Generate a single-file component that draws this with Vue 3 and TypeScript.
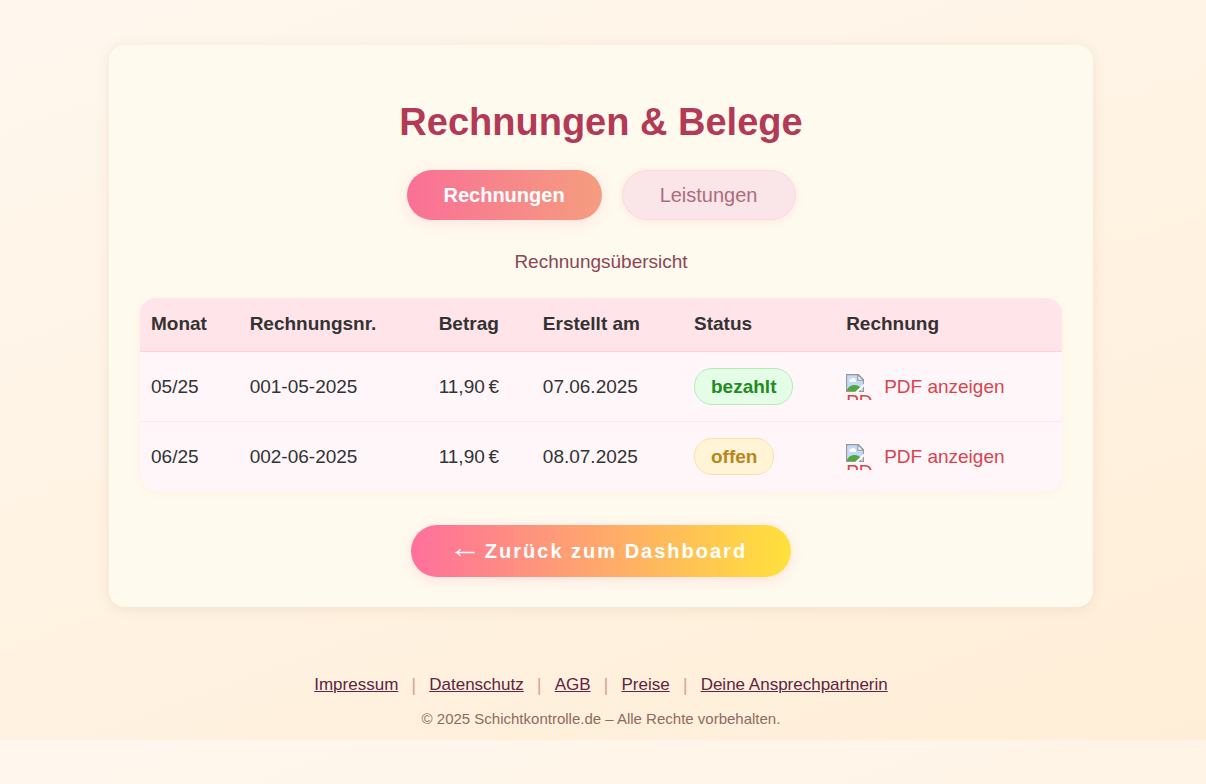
<script setup lang="ts">
import { ref } from 'vue'

interface Invoice {
  month: string
  number: string
  amount: string
  created: string
  status: 'bezahlt' | 'offen'
}

const tabs = ['Rechnungen', 'Leistungen']
const activeTab = ref('Rechnungen')

const invoices: Invoice[] = [
  { month: '05/25', number: '001-05-2025', amount: '11,90\u202f€', created: '07.06.2025', status: 'bezahlt' },
  { month: '06/25', number: '002-06-2025', amount: '11,90\u202f€', created: '08.07.2025', status: 'offen' },
]

const footerLinks = ['Impressum', 'Datenschutz', 'AGB', 'Preise', 'Deine Ansprechpartnerin']
</script>

<template>
  <div class="page">
    <main class="card">
      <h1>Rechnungen &amp; Belege</h1>

      <div class="tabs">
        <button
          v-for="tab in tabs"
          :key="tab"
          type="button"
          class="tab"
          :class="{ active: tab === activeTab }"
          @click="activeTab = tab"
        >{{ tab }}</button>
      </div>

      <p class="subtitle">Rechnungsübersicht</p>

      <table>
        <colgroup>
          <col class="c-month" />
          <col class="c-number" />
          <col class="c-amount" />
          <col class="c-date" />
          <col class="c-status" />
          <col />
        </colgroup>
        <thead>
          <tr>
            <th>Monat</th>
            <th>Rechnungsnr.</th>
            <th>Betrag</th>
            <th>Erstellt am</th>
            <th>Status</th>
            <th>Rechnung</th>
          </tr>
        </thead>
        <tbody>
          <tr v-for="inv in invoices" :key="inv.number">
            <td>{{ inv.month }}</td>
            <td>{{ inv.number }}</td>
            <td>{{ inv.amount }}</td>
            <td>{{ inv.created }}</td>
            <td><span class="badge" :class="inv.status">{{ inv.status }}</span></td>
            <td>
              <a href="#" class="pdf">
                <span class="thumb">
                  <svg viewBox="0 0 16 16" width="18" height="18" aria-hidden="true">
                    <path d="M.5.5H11L15.5 5V15.5H.5Z" fill="#c3d9fb" />
                    <path d="M3 6.5a1.7 1.7 0 0 1 2-2.3 2 2 0 0 1 3.5.8A1.3 1.3 0 0 1 8.5 7H4Z" fill="#fff" />
                    <path d="M1 15V13.5C3.5 10 7 9 11 10.5L13 12V15Z" fill="#4faa3c" />
                    <path d="M.5.5H11L15.5 5V15.5H.5Z" fill="none" stroke="#989898" />
                    <path d="M10.5.5V5.5H15.5Z" fill="#f5f5f5" stroke="#989898" />
                    <path d="M7.5 16.5L16.5 8V10.5L10.5 16.5Z" fill="#fff6fa" />
                  </svg>
                  <span class="alt">PDF</span>
                </span>
                <span>PDF anzeigen</span>
              </a>
            </td>
          </tr>
        </tbody>
      </table>

      <a href="#" class="back">
        <svg viewBox="0 0 20 12" width="20" height="12" aria-hidden="true">
          <path d="M1 7.500H19.500M5.500 4Q4 6.500 1 7.500Q4 8.500 5.500 11" fill="none" stroke="#fff" stroke-width="1.300" />
        </svg>
        <span>Zurück zum Dashboard</span>
      </a>
    </main>

    <footer>
      <nav>
        <template v-for="(link, i) in footerLinks" :key="link">
          <span v-if="i > 0" class="sep">|</span>
          <a href="#">{{ link }}</a>
        </template>
      </nav>
      <p>© 2025 Schichtkontrolle.de – Alle Rechte vorbehalten.</p>
    </footer>
  </div>
</template>

<style>
body {
  margin: 0;
  background: linear-gradient(160deg, #fff7ee 0%, #fff3e3 50%, #ffeed7 100%);
}
</style>

<style scoped>
.page {
  box-sizing: border-box;
  display: flex;
  flex-direction: column;
  align-items: center;
  padding: 45px 4px 11px 0;
  font-family: "Liberation Sans", Arial, sans-serif;
  color: #333;
}

.card {
  box-sizing: border-box;
  width: calc(100% - 32px);
  max-width: 984px;
  padding: 53px 31px 30px;
  border-radius: 16px;
  background: #fffaee;
  box-shadow: 0 2px 14px rgba(120, 80, 40, 0.1);
  display: flex;
  flex-direction: column;
  align-items: center;
}

h1 {
  margin: 0 0 24px;
  font-size: 38px;
  line-height: 48px;
  color: #b23a56;
}

.tabs {
  display: flex;
  gap: 20px;
}

.tab {
  height: 50px;
  padding: 0 37px;
  border: 1px solid #ffd9dc;
  border-radius: 25px;
  background: #fae5e9;
  box-shadow: 0 2px 9px rgba(255, 111, 145, 0.12);
  color: #ad6c7d;
  font-family: inherit;
  font-size: 20px;
  cursor: pointer;
}

.tab.active {
  border: 0;
  background: linear-gradient(90deg, #f97096, #f59d7f);
  box-shadow: 0 3px 16px rgba(255, 111, 145, 0.16);
  color: #fff;
  font-weight: bold;
}

.subtitle {
  margin: 30px 0 24px;
  font-size: 19px;
  line-height: 24px;
  color: #8d4556;
}

table {
  width: 100%;
  border-collapse: separate;
  border-spacing: 0;
  border-radius: 16px;
  overflow: hidden;
  background: #fff6fa;
  box-shadow: 0 2px 9px rgba(255, 170, 170, 0.12);
  font-size: 19px;
  line-height: 23px;
  text-align: left;
}

.c-month { width: 10.7%; }
.c-number { width: 20.5%; }
.c-amount { width: 11.3%; }
.c-date { width: 16.4%; }
.c-status { width: 16.5%; }

th {
  padding: 14px 11px 16px;
  border-bottom: 1px solid #ffd0dc;
  background: #ffe4e9;
}

td {
  height: 69px;
  padding: 0 11px;
  border-bottom: 1px solid #ffe4ec;
}

tbody tr:last-child td {
  border-bottom: 0;
}

.badge {
  display: inline-block;
  padding: 6px 16px;
  border: 1px solid;
  border-radius: 18px;
  font-weight: bold;
}

.badge.bezahlt {
  border-color: #b9e8b9;
  background: #e3fde6;
  color: #228b22;
}

.badge.offen {
  border-color: #f5e2ab;
  background: #fff4d6;
  color: #b8861b;
}

.pdf {
  display: flex;
  align-items: center;
  gap: 12px;
  color: #d9444d;
  text-decoration: none;
}

.thumb {
  width: 26px;
  height: 26px;
  overflow: hidden;
}

.thumb svg {
  display: block;
}

.alt {
  display: block;
  line-height: 20px;
}

.back {
  display: flex;
  align-items: center;
  gap: 10px;
  margin-top: 34px;
  padding: 0 44px;
  border-radius: 26px;
  background: linear-gradient(90deg, #ff6f9c, #ffe13b);
  box-shadow: 0 3px 14px rgba(255, 111, 145, 0.18);
  color: #fff;
  font-size: 20px;
  font-weight: bold;
  letter-spacing: 2px;
  line-height: 52px;
  text-decoration: none;
}

footer {
  margin-top: 66px;
  text-align: center;
}

nav {
  display: flex;
  flex-wrap: wrap;
  justify-content: center;
  gap: 13px;
  font-size: 17px;
  line-height: 24px;
}

nav a {
  color: #5e2444;
}

.sep {
  color: #dda494;
  font-size: 19px;
}

footer p {
  margin: 12px 0 0;
  font-size: 15px;
  line-height: 20px;
  color: #8d6b62;
}
</style>
